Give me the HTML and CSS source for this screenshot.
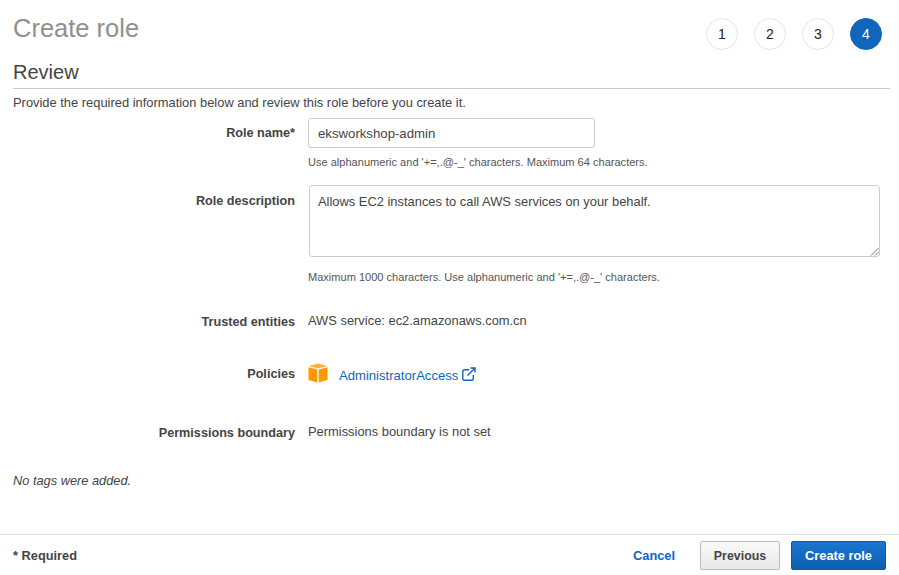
FILE: index.html
```html
<!DOCTYPE html>
<html lang="en">
<head>
    <meta charset="UTF-8">
    <title>Create role</title>
    <link rel="stylesheet" href="styles.css">
</head>
<body>
<div class="page">
    <div class="top">
        <h1 class="title">Create role</h1>
        <div class="steps">
            <span class="step">1</span>
            <span class="step">2</span>
            <span class="step">3</span>
            <span class="step active">4</span>
        </div>
    </div>
    <h2 class="section">Review</h2>
    <p class="intro">Provide the required information below and review this role before you create it.</p>

    <div class="row row_name">
        <label class="label">Role name*</label>
        <div class="field">
            <div class="input">eksworkshop-admin</div>
            <p class="hint">Use alphanumeric and '+=,.@-_' characters. Maximum 64 characters.</p>
        </div>
    </div>
    <div class="row row_desc">
        <label class="label">Role description</label>
        <div class="field">
            <div class="textarea">
                Allows EC2 instances to call AWS services on your behalf.
                <svg class="grip" width="9" height="9" viewBox="0 0 9 9"><path d="M1 8.5 8.5 1M5 8.5 8.5 5" stroke="#777" fill="none"/></svg>
            </div>
            <p class="hint">Maximum 1000 characters. Use alphanumeric and '+=,.@-_' characters.</p>
        </div>
    </div>
    <div class="row row_trusted">
        <label class="label">Trusted entities</label>
        <div class="value">AWS service: ec2.amazonaws.com.cn</div>
    </div>
    <div class="row row_policies">
        <label class="label">Policies</label>
        <div class="value policy">
            <svg class="box_icon" width="20" height="20" viewBox="0 0 20 20">
                <path d="M10 0.500 19.500 3 10 5.500 0.500 3Z" fill="#fbb040"/>
                <path d="M0.500 4.200 9.300 6.500V19.500L0.500 17Z" fill="#f90"/>
                <path d="M19.500 4.200 10.700 6.500V19.500L19.500 17Z" fill="#f90"/>
            </svg>
            <a class="link" href="#">AdministratorAccess</a>
            <svg class="ext_icon" width="14" height="14" viewBox="0 0 14 14" fill="none" stroke="#0d66bd" stroke-width="1.400">
                <path d="M7 2.700H2.300A1.500 1.500 0 0 0 0.800 4.200V11.700A1.500 1.500 0 0 0 2.300 13.200H9.800A1.500 1.500 0 0 0 11.300 11.700V8"/>
                <path d="M5.500 8.500 12.500 1.500M8.500 1H13V5.500"/>
            </svg>
        </div>
    </div>
    <div class="row row_boundary">
        <label class="label">Permissions boundary</label>
        <div class="value">Permissions boundary is not set</div>
    </div>
    <p class="no_tags">No tags were added.</p>

    <div class="footer">
        <span class="required">* Required</span>
        <div class="actions">
            <a class="cancel" href="#">Cancel</a>
            <button class="btn">Previous</button>
            <button class="btn primary">Create role</button>
        </div>
    </div>
</div>
</body>
</html>
```

FILE: styles.css
```css
*{margin: 0;padding: 0;box-sizing: border-box;}
html,body{
    width: 899px;
    height: 575px;
    overflow: hidden;
    background: #fff;
}
body{
    font-family: "Liberation Sans", Arial, sans-serif;
    font-size: 12.900px;
    color: #444;
}
.page{
    display: flex;
    flex-direction: column;
    height: 575px;
    padding: 0 9px 0 13px;
}
.top{
    display: flex;
    justify-content: space-between;
    height: 60px;
    padding: 13px 8px 0 0;
}
.title{
    font-size: 25.500px;
    font-weight: normal;
    line-height: 30px;
    color: #8f8f8f;
}
.steps{
    display: flex;
    gap: 16px;
    padding-top: 5px;
}
.step{
    display: flex;
    align-items: center;
    justify-content: center;
    width: 32px;
    height: 32px;
    border: 1px solid #e4e4e4;
    border-radius: 50%;
    font-size: 14px;
    color: #222;
}
.step.active{
    background: #0f66bb;
    border-color: #0f66bb;
    color: #fff;
}
.section{
    font-size: 20px;
    font-weight: normal;
    line-height: 24px;
    height: 29px;
    border-bottom: 1px solid #ccc;
    color: #444;
}
.intro{
    margin-top: 6px;
    line-height: 16px;
}
.row{
    display: flex;
    gap: 13px;
}
.label{
    width: 282px;
    flex: none;
    text-align: right;
    font-size: 12.650px;
    font-weight: bold;
}
.field{
    flex: 1;
}
.input{
    width: 287px;
    height: 30px;
    padding: 1px 9px 0;
    font-size: 13.200px;
    line-height: 27px;
    border: 1px solid #ccc;
    border-radius: 3px;
}
.hint{
    font-size: 11.050px;
    line-height: 14px;
    color: #555;
}
.row_name{
    margin-top: 7px;
}
.row_name .label{
    padding-top: 8px;
}
.row_name .hint{
    margin-top: 7px;
}
.row_desc{
    margin-top: 16px;
}
.row_desc .label{
    padding-top: 9px;
}
.textarea{
    position: relative;
    width: 571px;
    height: 72px;
    margin-left: 1px;
    padding: 8px;
    border: 1px solid #ccc;
    border-radius: 3px;
    line-height: 16px;
}
.grip{
    position: absolute;
    right: 0;
    bottom: 0;
}
.row_desc .hint{
    margin-top: 13px;
}
.row_trusted{
    margin-top: 29px;
    line-height: 16px;
}
.row_trusted .label{
    padding-top: 1px;
}
.row_policies{
    margin-top: 34px;
    line-height: 16px;
    height: 26px;
}
.row_policies .label{
    padding-top: 2px;
}
.policy{
    display: flex;
    align-items: flex-start;
}
.box_icon{
    margin-top: -1px;
}
.link{
    margin: 4px 0 0 11px;
    font-size: 13.100px;
    color: #0d66bd;
    text-decoration: none;
}
.ext_icon{
    margin: 3px 0 0 4px;
}
.row_boundary{
    margin-top: 34px;
    line-height: 16px;
}
.row_boundary .label{
    padding-top: 1px;
}
.no_tags{
    margin-top: 32px;
    line-height: 16px;
    font-size: 12.800px;
    font-style: italic;
}
.footer{
    display: flex;
    align-items: center;
    justify-content: space-between;
    margin: auto -9px 0 -13px;
    height: 41px;
    padding: 0 13px;
    border-top: 1px solid #ddd;
}
.required{
    font-size: 12.800px;
    font-weight: bold;
}
.actions{
    display: flex;
    align-items: center;
}
.cancel{
    margin-right: 25px;
    font-size: 12.800px;
    font-weight: bold;
    color: #0d66bd;
    text-decoration: none;
}
.btn{
    width: 80px;
    height: 29px;
    margin-right: 11px;
    padding-top: 1px;
    font: bold 12.400px "Liberation Sans", Arial, sans-serif;
    color: #444;
    background: linear-gradient(to bottom, #fafafa 0%, #e8e8e8 100%);
    border: 1px solid #bbb;
    border-radius: 2px;
}
.btn.primary{
    width: 95px;
    margin-right: 0;
    padding-top: 0;
    font-size: 12.800px;
    color: #fff;
    background: linear-gradient(to bottom, #1a76cf 0%, #0d5fb0 100%);
    border-color: #0c5aa6;
}
```
